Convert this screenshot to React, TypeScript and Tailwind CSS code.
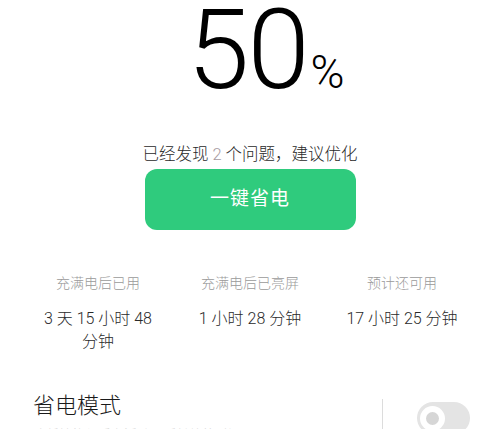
export default function App() {
  const stats = [
    { label: '充满电后已用', value: '3 天 15 小时 48 分钟' },
    { label: '充满电后已亮屏', value: '1 小时 28 分钟' },
    { label: '预计还可用', value: '17 小时 25 分钟' },
  ];

  return (
    <div className="w-[500px] h-[429px] overflow-hidden bg-white flex flex-col items-center font-[Roboto,'Noto_Sans_CJK_SC',sans-serif] font-light text-[#222] [&>*]:shrink-0">
      {/* battery level */}
      <div className="mt-[2px] h-[96px] flex items-baseline pl-[32px] leading-[96px]">
        <span className="text-[112px] font-light tracking-[-2px] text-black">50</span>
        <span className="ml-[3px] text-[46px] leading-none font-light text-black">%</span>
      </div>

      <p className="mt-[45px] text-[16.5px] leading-[24px] text-[#2a2a2a]">
        已经发现 <span className="text-[#a89ba2]">2</span> 个问题，建议优化
      </p>

      <button className="mt-[2px] w-[211px] h-[61px] rounded-[12px] bg-[#2fcb7d] text-white text-[19px] font-normal tracking-[1px]">
        一键省电
      </button>

      {/* usage stats */}
      <div className="mt-[43px] w-full px-[22px] grid grid-cols-3">
        {stats.map((s) => (
          <div key={s.label} className="flex flex-col items-center px-[10px] text-center">
            <div className="text-[14px] leading-[20px] text-[#9a9a9a]">{s.label}</div>
            <div className="mt-[14px] text-[16px] leading-[23px] text-[#2a2a2a] break-keep">{s.value}</div>
          </div>
        ))}
      </div>

      {/* power saving mode */}
      <div className="mt-[38px] w-full flex items-start pl-[33px] pr-[30px]">
        <div className="flex-1 min-w-0">
          <div className="text-[22px] leading-[30px] text-[#1a1a1a]">省电模式</div>
          <div className="mt-[5px] text-[13px] leading-[18px] text-[#d0d0d0]">降低性能与后台活动，延长续航时间</div>
        </div>
        <div className="mt-[8px] w-px h-[40px] bg-[#dcdcdc]" />
        <div className="ml-[34px] mt-[11px] w-[53px] h-[32px] rounded-full bg-[#e4e4e4] flex items-center pl-[3px]">
          <div className="w-[25px] h-[25px] rounded-full bg-white flex items-center justify-center">
            <div className="w-[13px] h-[13px] rounded-full bg-[#d6d6d6]" />
          </div>
        </div>
      </div>
    </div>
  );
}
